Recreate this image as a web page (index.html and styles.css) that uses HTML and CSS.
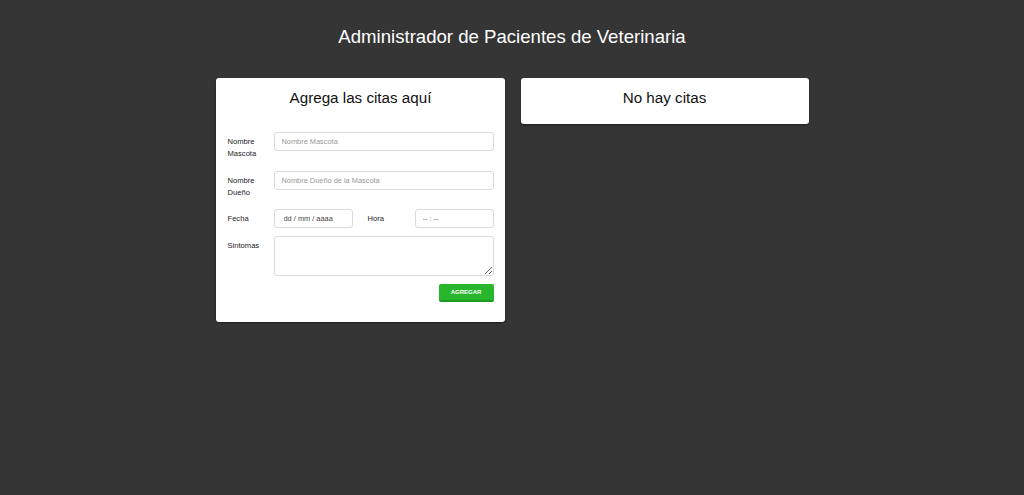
FILE: index.html
```html
<!DOCTYPE html>
<html lang="es">
<head>
<meta charset="utf-8">
<title>Administrador de Pacientes</title>
<link rel="stylesheet" href="styles.css">
</head>
<body>
  <h1 class="title">Administrador de Pacientes de Veterinaria</h1>
  <div class="container">
    <div class="card form-card">
      <h2 class="card-title">Agrega las citas aquí</h2>
      <form class="form">
        <div class="row row-tall">
          <label class="label">Nombre Mascota</label>
          <input class="input" type="text" placeholder="Nombre Mascota">
        </div>
        <div class="row row-tall row-b10">
          <label class="label">Nombre Dueño</label>
          <input class="input" type="text" placeholder="Nombre Dueño de la Mascota">
        </div>
        <div class="row row-short">
          <label class="label">Fecha</label>
          <input class="input input-half input-date" type="text" placeholder="dd / mm / aaaa">
          <label class="label label-hora">Hora</label>
          <input class="input input-half input-time" type="text" placeholder="-- : --">
        </div>
        <div class="row row-short">
          <label class="label">Sintomas</label>
          <textarea class="textarea"></textarea>
        </div>
        <div class="actions">
          <button class="btn" type="button">AGREGAR</button>
        </div>
      </form>
    </div>
    <div class="card list-card">
      <h2 class="card-title">No hay citas</h2>
    </div>
  </div>
</body>
</html>
```
FILE: styles.css
```css
* { box-sizing: border-box; }
html, body { margin: 0; padding: 0; }
body {
  background: #353535;
  font-family: "Liberation Sans", Arial, sans-serif;
  color: #222;
  min-height: 495px;
}
.title {
  margin: 0;
  padding-top: 27px;
  height: 78px;
  text-align: center;
  color: #fff;
  font-weight: normal;
  font-size: 18.6px;
  line-height: 20px;
}
.container {
  display: flex;
  justify-content: center;
  align-items: flex-start;
  gap: 16px;
}
.card {
  background: #fff;
  border-radius: 3px;
  box-shadow: 0 1px 2px rgba(0,0,0,0.4);
}
.form-card {
  width: 289px;
  padding: 10px 11px 20px 12px;
}
.list-card {
  width: 288px;
  padding: 10px 12px 16px;
}
.card-title {
  margin: 0;
  text-align: center;
  font-weight: normal;
  font-size: 15.2px;
  line-height: 20px;
  color: #111;
}
.form { margin-top: 24px; }
.row {
  display: flex;
  align-items: flex-start;
  margin-bottom: 8px;
}
.row-tall { height: 28px; margin-bottom: 11px; }
.row-b10 { margin-bottom: 10px; }
.label {
  width: 46px;
  flex: none;
  padding-top: 4px;
  font-size: 7.6px;
  line-height: 12px;
  color: #222;
}
.label-hora { width: 47px; margin-left: 15px; }
.input {
  flex: 1;
  height: 19px;
  border: 1px solid #d9d9de;
  border-radius: 3px;
  padding: 0 7px;
  font-family: "Liberation Sans", Arial, sans-serif;
  font-size: 7.4px;
  color: #333;
  background: #fff;
  outline: none;
}
.input::placeholder { color: #999; }
.input-half { flex: none; width: 79px; }
.input-date { padding-left: 9px; }
.input-date::placeholder { color: #444; }
.input-time::placeholder { color: #666; }
.textarea {
  flex: 1;
  height: 40px;
  border: 1px solid #d9d9de;
  border-radius: 3px;
  resize: vertical;
  font-family: "Liberation Sans", Arial, sans-serif;
  font-size: 8px;
  outline: none;
  display: block;
}
.actions {
  display: flex;
  justify-content: flex-end;
}
.btn {
  width: 55px;
  height: 18px;
  padding: 0;
  border: none;
  border-bottom: 2px solid #1d9a22;
  border-radius: 2px;
  background: #28b62c;
  color: #fff;
  font-family: "Liberation Sans", Arial, sans-serif;
  font-size: 6px;
  font-weight: bold;
}
```
